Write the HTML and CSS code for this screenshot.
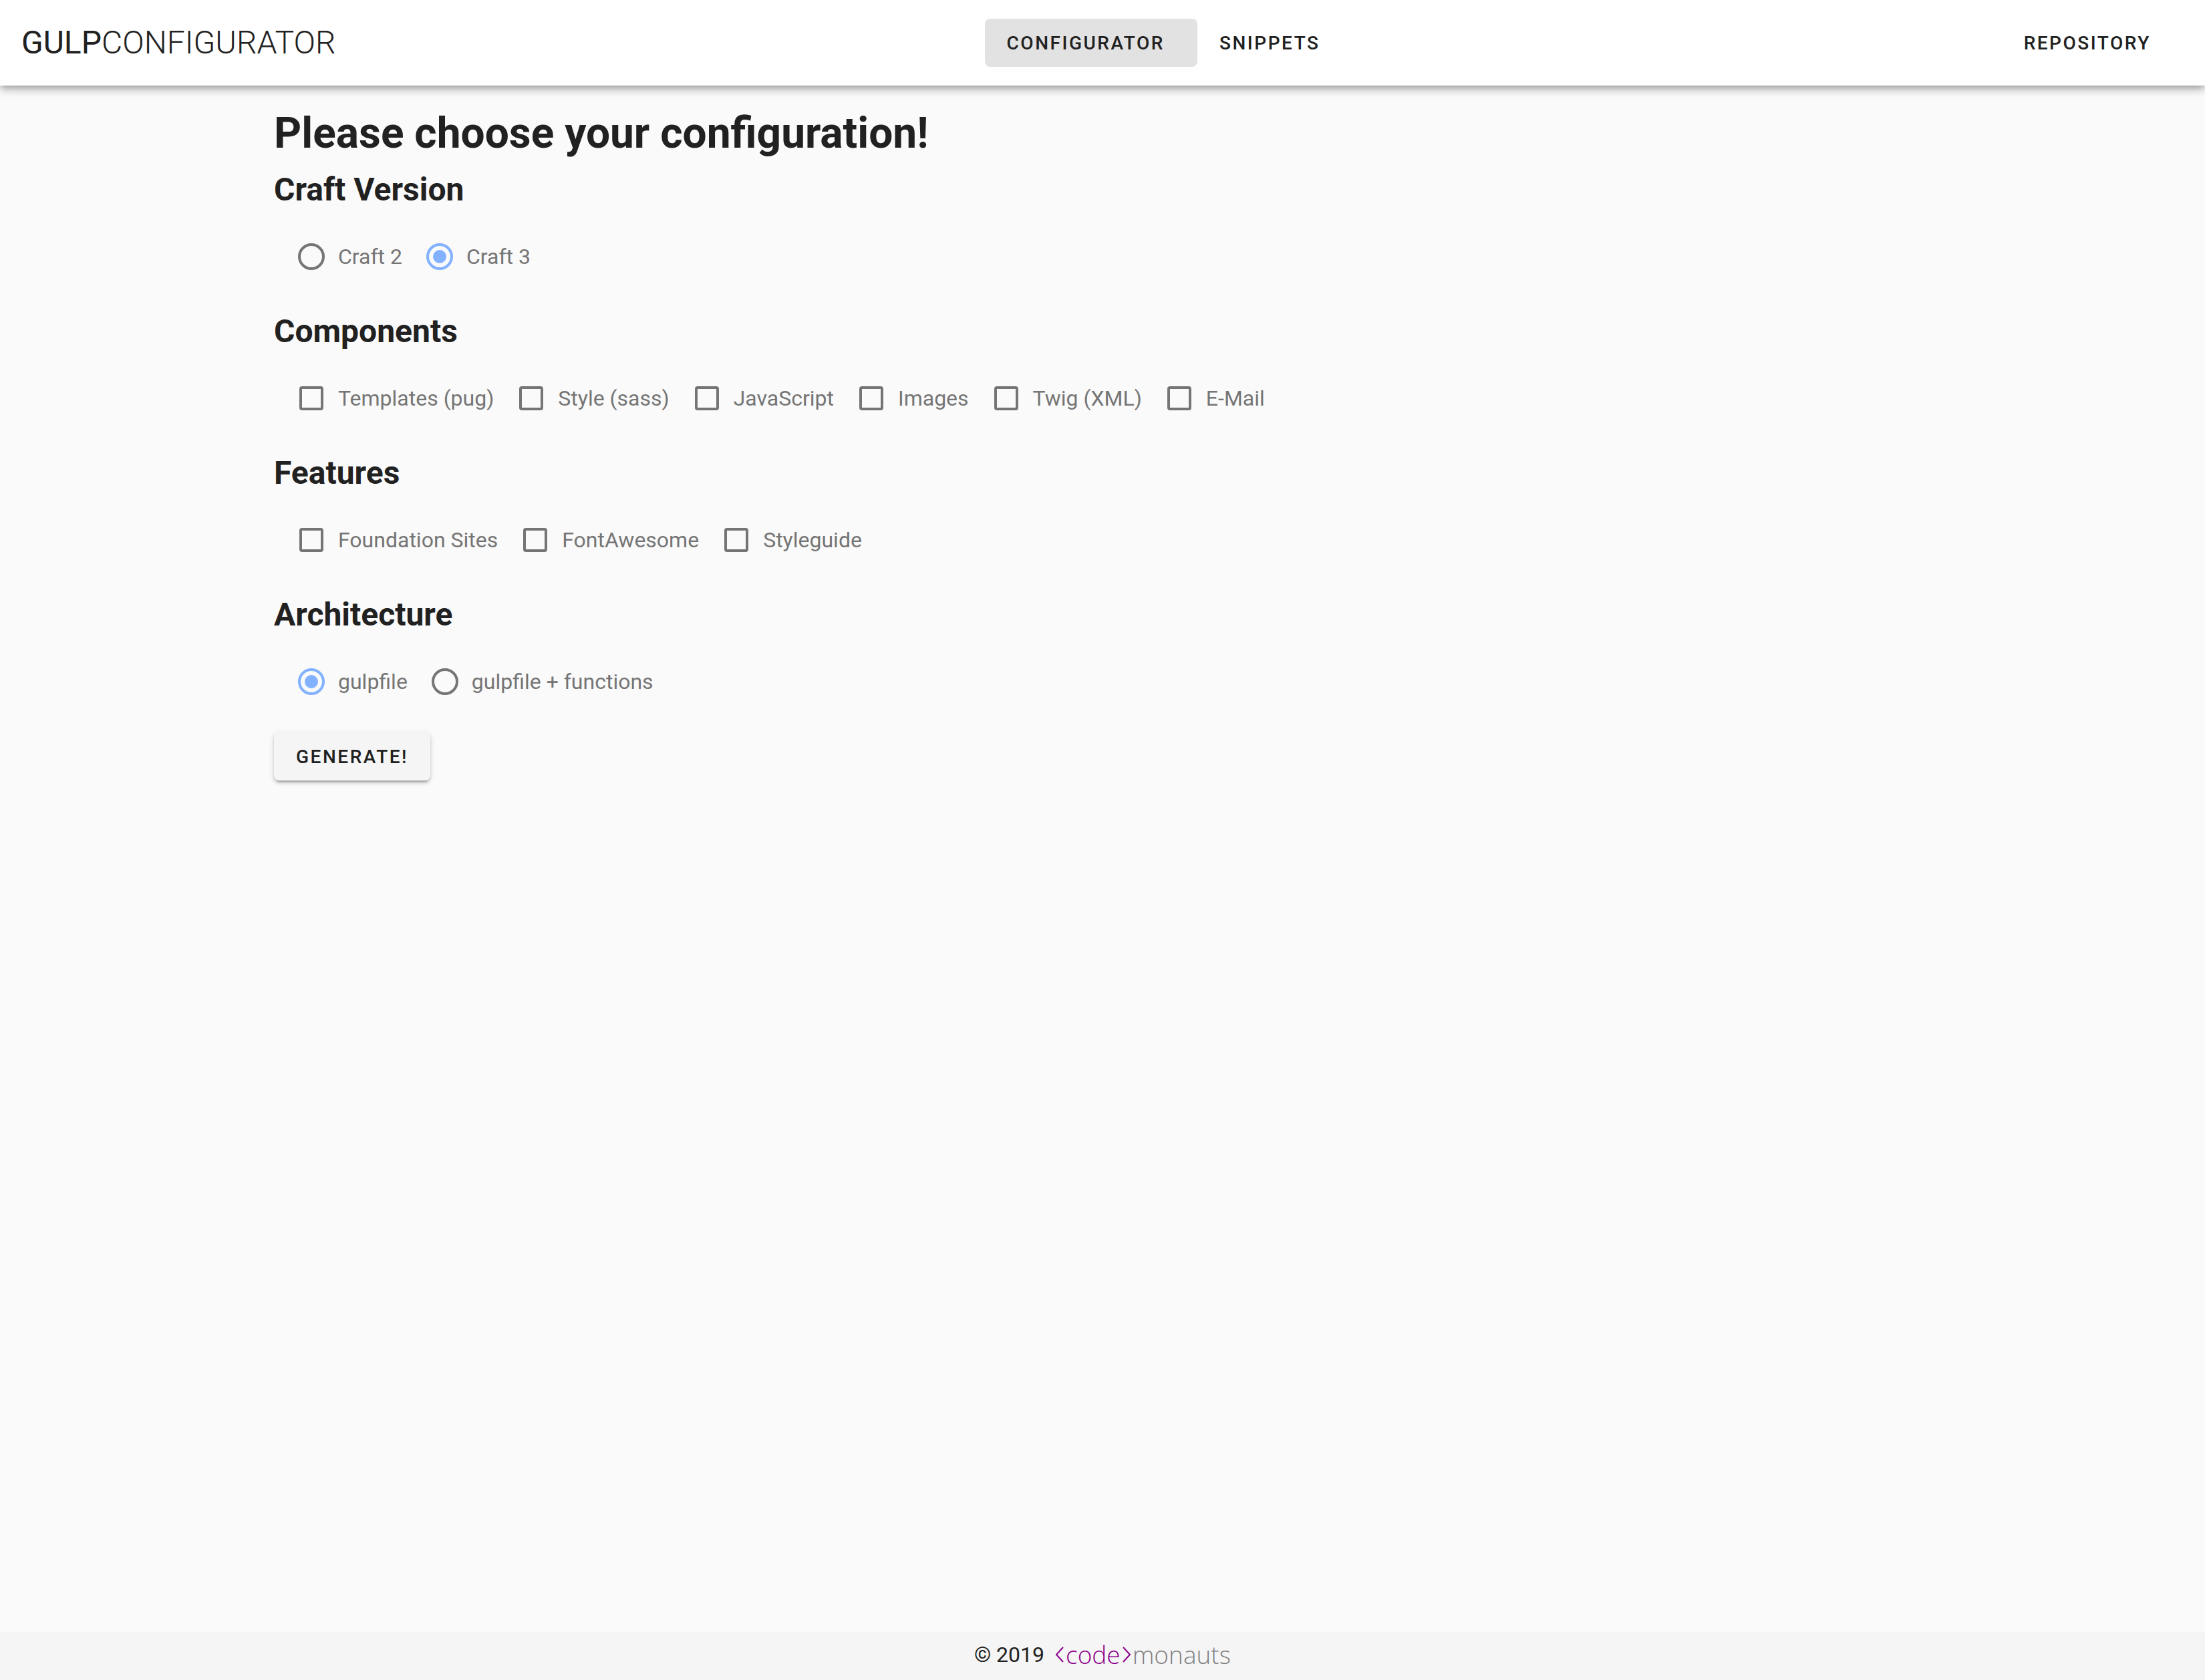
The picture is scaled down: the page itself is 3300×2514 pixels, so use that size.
FILE: index.html
```html
<!DOCTYPE html>
<html lang="en">
<head>
  <meta charset="utf-8">
  <meta name="viewport" content="width=device-width, initial-scale=1">
  <title>Gulpconfigurator</title>
  <link rel="stylesheet" href="styles.css">
</head>
<body>
  <header class="toolbar">
    <div class="brand"><span class="brand-strong">GULP</span>CONFIGURATOR</div>
    <nav class="nav">
      <a class="nav-link nav-link-active" href="#configurator">CONFIGURATOR</a>
      <a class="nav-link" href="#snippets">SNIPPETS</a>
    </nav>
    <a class="nav-link" href="#repository">REPOSITORY</a>
  </header>

  <main class="content">
    <form class="container">
      <h1 class="title">Please choose your configuration!</h1>

      <section class="group">
        <h2 class="group-title">Craft Version</h2>
        <div class="options">
          <label class="option"><input class="control radio" type="radio" name="craft" value="2">Craft 2</label>
          <label class="option"><input class="control radio" type="radio" name="craft" value="3" checked>Craft 3</label>
        </div>
      </section>

      <section class="group">
        <h2 class="group-title">Components</h2>
        <div class="options">
          <label class="option"><input class="control checkbox" type="checkbox" name="pug">Templates (pug)</label>
          <label class="option"><input class="control checkbox" type="checkbox" name="sass">Style (sass)</label>
          <label class="option"><input class="control checkbox" type="checkbox" name="js">JavaScript</label>
          <label class="option"><input class="control checkbox" type="checkbox" name="images">Images</label>
          <label class="option"><input class="control checkbox" type="checkbox" name="twig">Twig (XML)</label>
          <label class="option"><input class="control checkbox" type="checkbox" name="mail">E-Mail</label>
        </div>
      </section>

      <section class="group">
        <h2 class="group-title">Features</h2>
        <div class="options">
          <label class="option"><input class="control checkbox" type="checkbox" name="foundation">Foundation Sites</label>
          <label class="option"><input class="control checkbox" type="checkbox" name="fontawesome">FontAwesome</label>
          <label class="option"><input class="control checkbox" type="checkbox" name="styleguide">Styleguide</label>
        </div>
      </section>

      <section class="group">
        <h2 class="group-title">Architecture</h2>
        <div class="options">
          <label class="option"><input class="control radio" type="radio" name="architecture" value="file" checked>gulpfile</label>
          <label class="option"><input class="control radio" type="radio" name="architecture" value="functions">gulpfile + functions</label>
        </div>
      </section>

      <button class="generate" type="button">GENERATE!</button>
    </form>
  </main>

  <footer class="footer">
    <span>© 2019</span>
    <a class="logo" href="#codemonauts">
      <svg class="chevron" viewBox="0 0 14 24" aria-hidden="true"><path d="M12 1 2 12l10 11"/></svg>
      <span class="logo-code">code</span>
      <svg class="chevron" viewBox="0 0 14 24" aria-hidden="true"><path d="m2 1 10 11L2 23"/></svg>
      <span class="logo-rest">monauts</span>
    </a>
  </footer>
</body>
</html>
```
FILE: styles.css
```css
*,
*::before {
  box-sizing: border-box;
}

body {
  margin: 0;
  min-height: 100vh;
  display: flex;
  flex-direction: column;
  background: #fafafa;
  color: #212121;
  font-family: Roboto, "Liberation Sans", sans-serif;
  font-size: 32px;
  line-height: 48px;
}

a {
  color: inherit;
  text-decoration: none;
}

/* Toolbar */
.toolbar {
  display: flex;
  align-items: center;
  justify-content: space-between;
  height: 128px;
  padding: 0 32px;
  background: #fff;
  box-shadow:
    0 4px 8px -2px rgba(0, 0, 0, 0.2),
    0 8px 10px 0 rgba(0, 0, 0, 0.14),
    0 2px 20px 0 rgba(0, 0, 0, 0.12);
}

.brand {
  font-size: 48px;
  font-weight: 300;
}

.brand-strong {
  font-weight: 400;
}

.nav {
  display: flex;
}

.nav-link,
.generate {
  height: 72px;
  border-radius: 8px;
  font-size: 28px;
  font-weight: 500;
  line-height: 74px;
  letter-spacing: 0.09em;
}

.nav-link {
  padding: 0 49px 0 33px;
}

.nav-link-active {
  background: #e2e2e2;
}

/* Form */
.content {
  flex: 1;
}

.container {
  max-width: 2528px;
  margin: 0 auto;
  padding: 24px;
}

.title {
  margin: 0;
  font-size: 64px;
  font-weight: 700;
  line-height: 96px;
}

.group-title {
  margin: 0;
  font-size: 48px;
  font-weight: 700;
  line-height: 72px;
}

.options {
  display: flex;
  flex-wrap: wrap;
  gap: 32px;
  padding: 40px 32px 52px;
}

.option {
  display: flex;
  align-items: center;
  gap: 20px;
  color: #757575;
}

.control {
  appearance: none;
  flex: none;
  display: grid;
  place-items: center;
  border: 4px solid #757575;
}

.radio {
  width: 40px;
  height: 40px;
  margin: 0 0 0 4px;
  border-radius: 50%;
}

.radio:checked {
  border-color: #82b1ff;
}

.radio:checked::before {
  content: "";
  width: 20px;
  height: 20px;
  border-radius: 50%;
  background: #82b1ff;
}

.checkbox {
  width: 36px;
  height: 36px;
  margin: 0 2px 0 6px;
  border-radius: 4px;
}

.checkbox:checked {
  border-color: #82b1ff;
  background: #82b1ff;
}

.generate {
  display: block;
  padding: 0 33px;
  border: 0;
  background: #f5f5f5;
  color: inherit;
  font-family: inherit;
  box-shadow:
    0 6px 2px -4px rgba(0, 0, 0, 0.2),
    0 4px 4px 0 rgba(0, 0, 0, 0.14),
    0 2px 10px 0 rgba(0, 0, 0, 0.12);
}

/* Footer */
.footer {
  display: flex;
  align-items: center;
  justify-content: center;
  gap: 16px;
  height: 72px;
  padding-bottom: 4px;
  background: #f5f5f5;
}

.logo {
  display: flex;
  align-items: center;
  gap: 2px;
  font-family: "Open Sans", "Noto Sans", sans-serif;
  font-size: 37px;
  font-weight: 300;
}

.chevron {
  width: 14px;
  height: 24px;
  fill: none;
  stroke: #8b008b;
  stroke-width: 2;
}

.logo-code {
  color: #8b008b;
}

.logo-rest {
  color: #808080;
}
```
